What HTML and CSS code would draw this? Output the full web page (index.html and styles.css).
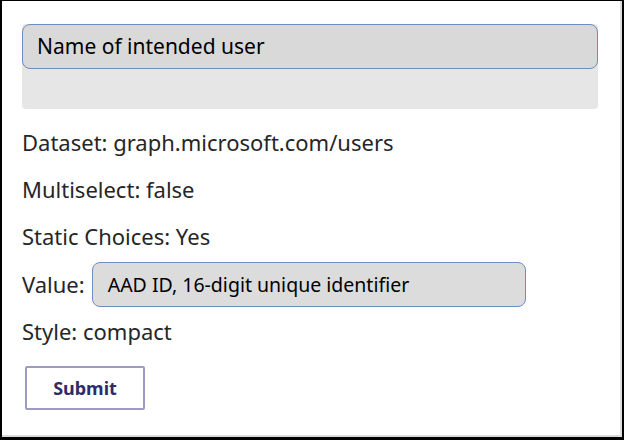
FILE: index.html
```html
<!DOCTYPE html>
<html>
<head>
<meta charset="utf-8">
<link rel="stylesheet" href="styles.css">
</head>
<body>
<div class="frame">
  <div class="field-group">
    <div class="input-box">Name of intended user</div>
  </div>
  <div class="prop prop-first">Dataset: graph.microsoft.com/users</div>
  <div class="prop">Multiselect: false</div>
  <div class="prop">Static Choices: Yes</div>
  <div class="value-row">
    <span class="value-label">Value:</span>
    <div class="value-box">AAD ID, 16-digit unique identifier</div>
  </div>
  <div class="prop">Style: compact</div>
  <button class="submit">Submit</button>
</div>
</body>
</html>
```
FILE: styles.css
```css
html, body {
  margin: 0;
  padding: 0;
  background: #ffffff;
}
.frame {
  box-sizing: border-box;
  width: 624px;
  height: 440px;
  border-style: solid;
  border-color: #000000;
  border-width: 1px 2px 3px 2px;
  box-shadow: inset -2px -2px 0 #dcdcdc;
  padding: 23px 0 0 20px;
  font-family: "Noto Sans", "Open Sans", sans-serif;
  color: #262626;
  display: flex;
  flex-direction: column;
  align-items: flex-start;
}
.field-group {
  width: 576px;
  height: 85px;
  background: #e6e6e6;
  border-radius: 4px;
}
.input-box {
  box-sizing: border-box;
  height: 45px;
  background: #d9d9d9;
  border: 1px solid #6f8cc0;
  border-radius: 8px;
  padding-left: 14px;
  font-size: 21px;
  line-height: 43px;
  color: #000000;
}
.prop {
  font-size: 22px;
  line-height: 47px;
  height: 47px;
}
.prop-first {
  margin-top: 10px;
}
.value-row {
  display: flex;
  align-items: center;
  gap: 7px;
  height: 48px;
}
.value-label {
  font-size: 22px;
}
.value-box {
  box-sizing: border-box;
  width: 434px;
  height: 45px;
  background: #dcdcdc;
  border: 1px solid #6f8cc0;
  border-radius: 8px;
  padding-left: 15px;
  font-size: 19.5px;
  line-height: 43px;
  color: #000000;
}
.submit {
  margin-top: 11px;
  margin-left: 3px;
  box-sizing: border-box;
  width: 120px;
  height: 44px;
  background: #ffffff;
  border: 2px solid #9d9ac6;
  border-radius: 2px;
  font-family: "Noto Sans", "Open Sans", sans-serif;
  font-weight: 700;
  font-size: 18px;
  color: #2e2c66;
  padding: 0;
}
```
